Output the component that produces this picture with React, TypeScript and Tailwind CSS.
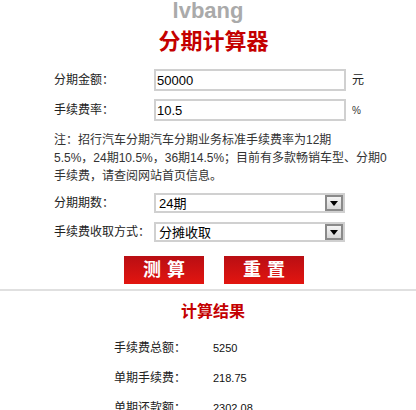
import React, { useState } from 'react';

const FONT = { fontFamily: '"Liberation Sans", "Noto Sans CJK SC", sans-serif' };

const ArrowBox: React.FC = () => (
  <div className="flex h-full w-[18px] items-center justify-center border-2 border-[#8a8a8a] bg-gradient-to-b from-[#f4f4f4] to-[#d6d6d6]">
    <svg width="8" height="5" viewBox="0 0 8 5">
      <path d="M0 0 H8 L4 5 Z" fill="#000" />
    </svg>
  </div>
);

const FakeSelect: React.FC<{ value: string }> = ({ value }) => (
  <div className="flex h-[20px] w-[191px] items-center justify-between border-2 border-[#d0d0d0] bg-white">
    <span className="pl-[3px] text-[13px] leading-none text-black">{value}</span>
    <ArrowBox />
  </div>
);

export default function App() {
  const [amount, setAmount] = useState('50000');
  const [rate, setRate] = useState('10.5');

  const results = [
    { label: '手续费总额：', value: '5250' },
    { label: '单期手续费：', value: '218.75' },
    { label: '单期还款额：', value: '2302.08' },
  ];

  return (
    <div className="h-[410px] w-[416px] overflow-hidden bg-white text-[12px] text-[#222]" style={FONT}>
      {/* header */}
      <div className="text-center text-[22px] font-bold leading-[22px] text-[#aaaaaa]" style={{ fontFamily: '"Liberation Sans", sans-serif' }}>
        lvbang
      </div>
      <h1 className="mt-[5px] pl-[11px] text-center text-[22px] font-bold leading-[30px] text-[#c40000]">分期计算器</h1>

      {/* form */}
      <div className="pl-[54px] pt-[12px]">
        <div className="flex items-center">
          <span className="w-[100px]">分期金额：</span>
          <input
            value={amount}
            onChange={(e) => setAmount(e.target.value)}
            className="h-[22px] w-[192px] border-2 border-[#d0d0d0] px-[1px] text-[13px] text-black outline-none"
          />
          <span className="ml-[6px]">元</span>
        </div>
        <div className="mt-[8px] flex items-center">
          <span className="w-[100px]">手续费率：</span>
          <input
            value={rate}
            onChange={(e) => setRate(e.target.value)}
            className="h-[22px] w-[192px] border-2 border-[#d0d0d0] px-[1px] text-[13px] text-black outline-none"
          />
          <span className="ml-[6px] text-[10px] text-[#333]">%</span>
        </div>

        <p className="mt-[10px] whitespace-nowrap leading-[18px] text-[#333]">
          注：招行汽车分期汽车分期业务标准手续费率为12期
          <br />
          5.5%，24期10.5%，36期14.5%；目前有多款畅销车型、分期0
          <br />
          手续费，请查阅网站首页信息。
        </p>

        <div className="mt-[8px] flex items-center">
          <span className="w-[100px]">分期期数：</span>
          <FakeSelect value="24期" />
        </div>
        <div className="mt-[9px] flex items-center">
          <span className="w-[100px]">手续费收取方式：</span>
          <FakeSelect value="分摊收取" />
        </div>
      </div>

      {/* buttons */}
      <div className="mt-[14px] flex justify-center gap-[20px] pl-[12px]">
        <button className="h-[28px] w-[80px] bg-gradient-to-b from-[#b90e13] to-[#e3150f] pl-[6px] text-[18px] font-bold tracking-[6px] text-white">
          测算
        </button>
        <button className="h-[28px] w-[80px] bg-gradient-to-b from-[#b90e13] to-[#e3150f] pl-[6px] text-[18px] font-bold tracking-[6px] text-white">
          重置
        </button>
      </div>

      <div className="mt-[5px] h-[2px] bg-[#e0e0e0]" />

      {/* results */}
      <h2 className="mt-[10px] pl-[10px] text-center text-[16px] font-bold leading-[22px] text-[#c40000]">计算结果</h2>
      <div className="mt-[10px] pl-[114px]">
        {results.map((r) => (
          <div key={r.label} className="flex h-[30px] items-center">
            <span className="w-[99px]">{r.label}</span>
            <span className="text-[11px] text-[#111]">{r.value}</span>
          </div>
        ))}
      </div>
    </div>
  );
}
